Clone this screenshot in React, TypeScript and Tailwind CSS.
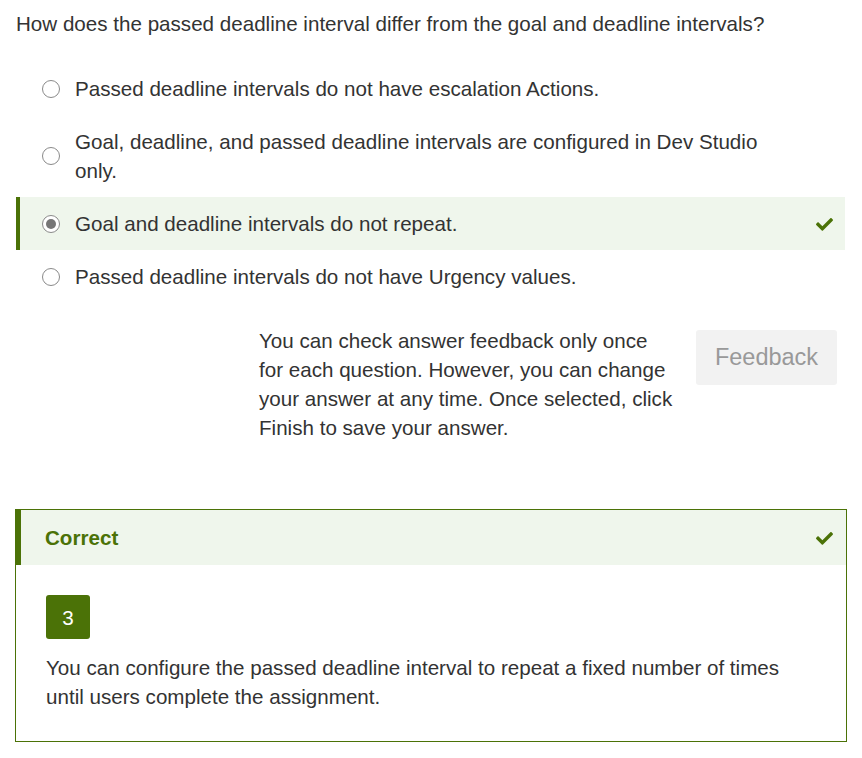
import React from "react";

const options = [
    "Passed deadline intervals do not have escalation Actions.",
    "Goal, deadline, and passed deadline intervals are configured in Dev Studio only.",
    "Goal and deadline intervals do not repeat.",
    "Passed deadline intervals do not have Urgency values.",
];

function Check() {
    return (
        <svg width="17" height="14" viewBox="0 0 512 420" className="fill-[#4b7207]">
            <path d="M173.9 405.1L7.5 238.7c-10-10-10-26.2 0-36.2l36.2-36.2c10-10 26.2-10 36.2 0L192 278.4 432.1 38.3c10-10 26.2-10 36.2 0l36.2 36.2c10 10 10 26.2 0 36.2L210.1 405.1c-10 10-26.2 10-36.2 0z" />
        </svg>
    );
}

function Radio({ checked }: { checked: boolean }) {
    return (
        <span className="w-[18px] h-[18px] shrink-0 rounded-full border border-[#8a8a8a] bg-white flex items-center justify-center">
            {checked && <span className="w-[10px] h-[10px] rounded-full bg-[#767676]" />}
        </span>
    );
}

export default function App() {
    const selected = 2;
    return (
        <div className="w-[862px] min-h-[758px] bg-white text-[#333] text-[20.6px] leading-[29px] font-['Liberation_Sans',Arial,sans-serif] px-[16px] pt-[9px]">
            <p>How does the passed deadline interval differ from the goal and deadline intervals?</p>

            <div className="mt-[24px] w-[829px]">
                {options.map((opt, i) => (
                    <div
                        key={i}
                        className={
                            i === selected
                                ? "flex items-center py-[12px] pl-[22px] pr-[12px] border-l-4 border-[#4b7207] bg-[#eff6ec]"
                                : "flex items-center py-[12px] pl-[26px] pr-[12px]"
                        }
                    >
                        <Radio checked={i === selected} />
                        <span className="ml-[15px] flex-1 pr-[50px]">{opt}</span>
                        {i === selected && <Check />}
                    </div>
                ))}
            </div>

            <div className="mt-[23px] flex items-start pl-[243px]">
                <p className="w-[417px]">
                    You can check answer feedback only once for each question. However, you can change your answer at any time. Once selected, click Finish to save your answer.
                </p>
                <button className="ml-[20px] mt-[4px] w-[141px] h-[55px] rounded-[3px] bg-[#f2f2f2] text-[#999] text-[23.5px]">
                    Feedback
                </button>
            </div>

            <div className="mt-[67px] -ml-px w-[832px] border border-[#4b7207]">
                <div className="h-[55px] flex items-center justify-between bg-[#eff6ec] border-l-[5px] border-[#4b7207] pl-[24px] pr-[13px]">
                    <span className="font-bold text-[#4b7207]">Correct</span>
                    <Check />
                </div>
                <div className="pl-[30px] pr-[30px] pt-[30px] pb-[30px]">
                    <div className="w-[44px] h-[44px] rounded-[3px] bg-[#4b7207] text-white flex items-center justify-center">
                        3
                    </div>
                    <p className="mt-[14px]">
                        You can configure the passed deadline interval to repeat a fixed number of times until users complete the assignment.
                    </p>
                </div>
            </div>
        </div>
    );
}
